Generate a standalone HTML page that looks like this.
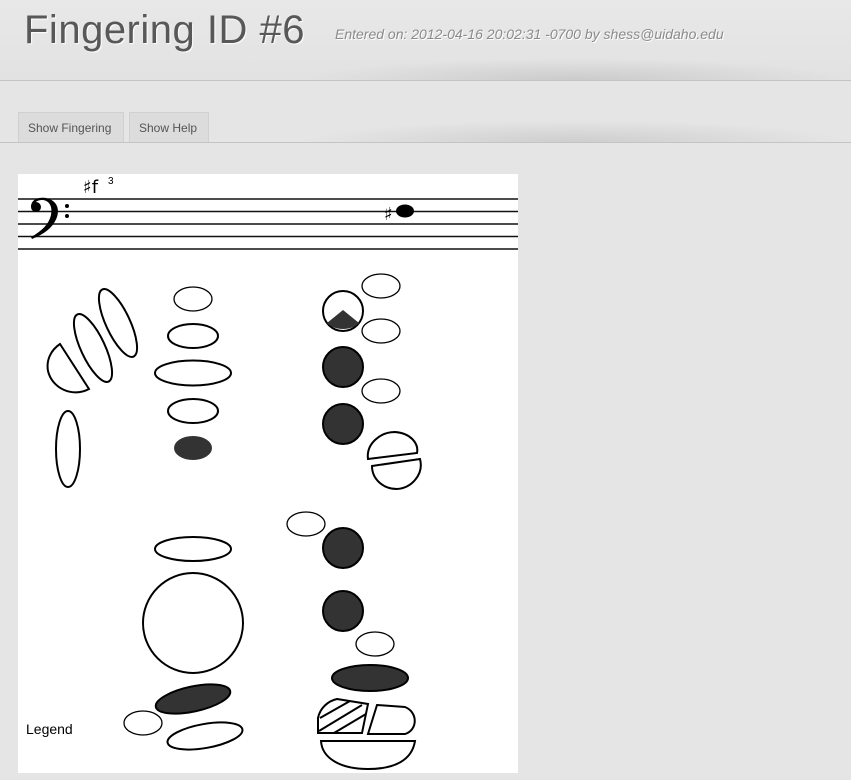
<!DOCTYPE html>
<html><head><style>
body{margin:0;width:851px;height:780px;background:#e5e5e5;font-family:"Liberation Sans",sans-serif;overflow:hidden;position:relative}
.hdr{position:absolute;left:0;top:0;width:851px;height:80px;background:linear-gradient(#e8e8e8,#e2e2e2);}
.line{position:absolute;left:0;width:851px;height:1px;background:#c4c4c4}
.shade{position:absolute;left:300px;width:551px;height:22px;background:radial-gradient(ellipse at 50% 100%,rgba(0,0,0,0.10),rgba(0,0,0,0) 70%)}
h1{position:absolute;left:24px;top:8px;margin:0;font-weight:normal;font-size:40px;color:#585858;text-shadow:1px 1px 1px #fff;letter-spacing:0.5px}
.meta{position:absolute;left:335px;top:26px;font-size:14px;font-style:italic;color:#8a8a8a;text-shadow:1px 1px 0 #fff}
.btn{position:absolute;top:112px;height:30px;background:#dcdcdc;border:1px solid #d0d0d0;border-bottom:none;font-size:12px;color:#555;line-height:30px;padding:0 9px;box-sizing:border-box}
</style></head><body>
<div class="hdr"></div>
<div class="shade" style="top:58px"></div>
<div class="line" style="top:80px"></div>
<h1>Fingering ID #6</h1>
<div class="meta">Entered on: 2012-04-16 20:02:31 -0700 by shess@uidaho.edu</div>
<div class="shade" style="top:120px"></div>
<div class="line" style="top:142px"></div>
<div class="btn" style="left:18px;width:106px">Show Fingering</div>
<div class="btn" style="left:129px;width:80px">Show Help</div>
<svg style="position:absolute;left:0;top:0" width="851" height="780" xmlns="http://www.w3.org/2000/svg">
<rect x="18" y="174" width="500" height="599" fill="#fff"/>
<g stroke="#111" stroke-width="1.5">
<line x1="18" y1="199" x2="518" y2="199"/><line x1="18" y1="211.5" x2="518" y2="211.5"/><line x1="18" y1="224" x2="518" y2="224"/><line x1="18" y1="236.5" x2="518" y2="236.5"/><line x1="18" y1="249" x2="518" y2="249"/>
</g>
<path d="M31 207 C31 199 39 197 46 198 C56 200 60 208 57 217 C53 228 44 234 32 239 L31 237 C42 231 49 224 51 215 C53 205 48 200 42 200 C37 200 34 203 34 205Z" fill="#000"/>
<circle cx="36" cy="207" r="5"/><circle cx="67" cy="206" r="2"/><circle cx="67" cy="216" r="2"/>
<text x="83" y="193" font-size="18" font-family="DejaVu Sans">♯f</text><text x="108" y="184" font-size="10">3</text>
<text x="384" y="220" font-size="18" font-family="DejaVu Sans">♯</text>
<ellipse cx="405" cy="211" rx="9" ry="6.5"/>
<g stroke="#000" stroke-width="2" fill="#fff">
<path d="M60 344 L89 389 C72 398 52 388 48 371 C46 360 51 350 60 344Z"/>
<ellipse cx="93" cy="348" rx="12" ry="37" transform="rotate(-25 93 348)"/>
<ellipse cx="118" cy="323" rx="12" ry="37" transform="rotate(-25 118 323)"/>
<ellipse cx="68" cy="449" rx="12" ry="38"/>
<ellipse cx="193" cy="299" rx="19" ry="12" stroke-width="1.3"/>
<ellipse cx="193" cy="336" rx="25" ry="12"/>
<ellipse cx="193" cy="373" rx="38" ry="12.5"/>
<ellipse cx="193" cy="411" rx="25" ry="12"/>
<ellipse cx="193" cy="448" rx="19" ry="12" fill="#333" stroke="none"/>
<ellipse cx="381" cy="286" rx="19" ry="12" stroke-width="1.3"/>
<ellipse cx="381" cy="331" rx="19" ry="12" stroke-width="1.3"/>
<ellipse cx="381" cy="391" rx="19" ry="12" stroke-width="1.3"/>
<circle cx="343" cy="311" r="20"/>
<path d="M327 323 L343 310 L359 323 C352 331 334 331 327 323Z" fill="#333" stroke="none"/>
<circle cx="343" cy="367" r="20" fill="#333"/>
<circle cx="343" cy="424" r="20" fill="#333"/>
<path d="M368 459 C366 444 380 432 395 432 C410 433 419 443 417 453Z"/>
<path d="M372 466 L420 459 C424 474 412 488 397 489 C383 489 372 479 372 466Z"/>
<ellipse cx="306" cy="524" rx="19" ry="12" stroke-width="1.3"/>
<circle cx="343" cy="548" r="20" fill="#333"/>
<circle cx="343" cy="611" r="20" fill="#333"/>
<ellipse cx="375" cy="644" rx="19" ry="12" stroke-width="1.3"/>
<ellipse cx="370" cy="678" rx="38" ry="13" fill="#333"/>
<ellipse cx="193" cy="549" rx="38" ry="12"/>
<circle cx="193" cy="623" r="50"/>
<ellipse cx="193" cy="699" rx="38" ry="12.5" fill="#333" transform="rotate(-12 193 699)"/>
<ellipse cx="143" cy="723" rx="19" ry="12" stroke-width="1.3"/>
<ellipse cx="205" cy="736" rx="38" ry="12" transform="rotate(-10 205 736)"/>
<path d="M337 699 L368 704 L362 733 L318 733 L318 718 C320 708 328 701 337 699Z"/>
<path d="M377 705 L405 707 C418 712 418 730 405 734 L368 734Z"/>
<path d="M321 741 L415 741 C412 760 395 769 368 769 C340 769 322 758 321 741Z"/>
</g>
<g stroke="#000" stroke-width="2">
<line x1="320" y1="718" x2="350" y2="701"/><line x1="319" y1="731" x2="362" y2="705"/><line x1="334" y1="733" x2="366" y2="714"/>
</g>
<text x="26" y="734" font-size="14" fill="#000">Legend</text>
</svg>
</body></html>
